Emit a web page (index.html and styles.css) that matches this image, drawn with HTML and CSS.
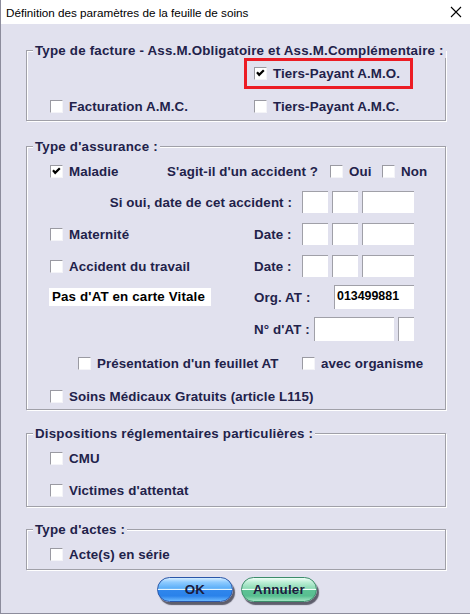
FILE: index.html
```html
<!DOCTYPE html>
<html lang="fr">
<head>
<meta charset="utf-8">
<title>Définition des paramètres de la feuille de soins</title>
<link rel="stylesheet" href="styles.css">
</head>
<body>
<div class="window">
  <div class="titlebar">
    <span class="title">Définition des paramètres de la feuille de soins</span>
    <svg class="close" width="12" height="12" viewBox="0 0 12 12"><path d="M1 1 L11 11 M11 1 L1 11" stroke="#000" stroke-width="1.1" fill="none"/></svg>
  </div>
  <div class="content">
    <fieldset class="group g1">
      <legend>Type de facture - Ass.M.Obligatoire et Ass.M.Complémentaire :</legend>
      <div class="row-red">
        <div class="redbox">
          <span class="check"><span class="cb"><svg viewBox="0 0 11 11" width="11" height="11"><path d="M2 4.2 L4.2 6.8 L8.8 2.2" stroke="#000" stroke-width="2.2" fill="none"/></svg></span><span>Tiers-Payant A.M.O.</span></span>
        </div>
      </div>
      <div class="row g1b">
        <span class="check w204"><span class="cb"></span><span>Facturation A.M.C.</span></span>
        <span class="check"><span class="cb"></span><span>Tiers-Payant A.M.C.</span></span>
      </div>
    </fieldset>

    <fieldset class="group g2">
      <legend>Type d'assurance :</legend>
      <div class="row r1">
        <span class="check w117"><span class="cb"><svg viewBox="0 0 11 11" width="11" height="11"><path d="M2 4.2 L4.2 6.8 L8.8 2.2" stroke="#000" stroke-width="2.2" fill="none"/></svg></span><span>Maladie</span></span>
        <span class="w163">S'agit-il d'un accident ?</span>
        <span class="check w52"><span class="cb"></span><span>Oui</span></span>
        <span class="check"><span class="cb"></span><span>Non</span></span>
      </div>
      <div class="row r2">
        <span class="lbl-right">Si oui, date de cet accident :</span>
        <span class="date"><span class="in d2"></span><span class="in d2"></span><span class="in y4"></span></span>
      </div>
      <div class="row r3">
        <span class="check w204"><span class="cb"></span><span>Maternité</span></span>
        <span class="w48">Date :</span>
        <span class="date"><span class="in d2"></span><span class="in d2"></span><span class="in y4"></span></span>
      </div>
      <div class="row r4">
        <span class="check w204"><span class="cb"></span><span>Accident du travail</span></span>
        <span class="w48">Date :</span>
        <span class="date"><span class="in d2"></span><span class="in d2"></span><span class="in y4"></span></span>
      </div>
      <div class="row r5">
        <span class="pas">Pas d'AT en carte Vitale</span>
        <span class="org-lbl">Org. AT :</span>
        <span class="in org">013499881</span>
      </div>
      <div class="row r6">
        <span class="nat-lbl">N° d'AT :</span>
        <span class="date"><span class="in nat"></span><span class="in nat-key"></span></span>
      </div>
      <div class="row r7">
        <span class="check w224"><span class="cb"></span><span>Présentation d'un feuillet AT</span></span>
        <span class="check"><span class="cb"></span><span>avec organisme</span></span>
      </div>
      <div class="row r8">
        <span class="check"><span class="cb"></span><span>Soins Médicaux Gratuits (article L115)</span></span>
      </div>
    </fieldset>

    <fieldset class="group g3">
      <legend>Dispositions réglementaires particulières :</legend>
      <div class="row r-cmu">
        <span class="check"><span class="cb"></span><span>CMU</span></span>
      </div>
      <div class="row r-vic">
        <span class="check"><span class="cb"></span><span>Victimes d'attentat</span></span>
      </div>
    </fieldset>

    <fieldset class="group g4">
      <legend>Type d'actes :</legend>
      <div class="row r-act">
        <span class="check"><span class="cb"></span><span>Acte(s) en série</span></span>
      </div>
    </fieldset>

    <div class="buttons">
      <button class="btn ok">OK</button>
      <button class="btn cancel">Annuler</button>
    </div>
  </div>
</div>
</body>
</html>
```

FILE: styles.css
```css
html, body {
  margin: 0;
  padding: 0;
  background: #e1e1ee;
}

.window {
  width: 470px;
  height: 614px;
  box-sizing: border-box;
  background: #e1e1ee;
  border-left: 1px solid #8c8c9c;
  border-bottom: 1px solid #8c8c9c;
  overflow: hidden;
  font-family: "Liberation Sans", Arial, sans-serif;
}

.titlebar {
  height: 24px;
  background: #ffffff;
  display: flex;
  align-items: center;
  justify-content: space-between;
  padding: 0 8px 0 5px;
}

.title {
  font-family: "Liberation Sans", Arial, sans-serif;
  font-size: 11.7px;
  color: #000;
}

.close {
  display: block;
}

.content {
  padding-left: 25px;
  font-size: 13.33px;
  font-weight: bold;
  color: #22224a;
  letter-spacing: 0.1px;
}

.group {
  width: 420px;
  box-sizing: border-box;
  margin: 0;
  padding: 0;
  border: 1px solid #a0a0a8;
  box-shadow: 1px 1px 0 #ffffff, inset 1px 1px 0 #ffffff;
  min-width: 0;
}

.group legend {
  margin-left: 6px;
  padding: 0 2px;
  line-height: 15px;
  height: 15px;
  background: #e1e1ee;
  white-space: nowrap;
  letter-spacing: 0.2px;
}

.g1 { margin-top: 19px; padding-bottom: 2px; }
.g2 { margin-top: 18px; padding-bottom: 1px; }
.g3 { margin-top: 16px; padding-bottom: 4px; }
.g4 { margin-top: 15px; padding-bottom: 3px; }

.row {
  display: flex;
  align-items: center;
  height: 24px;
  padding-left: 23px;
  white-space: nowrap;
}

.row-red {
  display: flex;
}

.redbox {
  margin-left: 217px;
  width: 169px;
  height: 31px;
  box-sizing: border-box;
  border: 3px solid #ec1c24;
  display: flex;
  align-items: center;
  padding-left: 7px;
}

.g1b { margin-top: 5px; }

.r1 { margin-top: 5px; }
.r2 { margin-top: 7px; }
.r3 { margin-top: 8px; }
.r4 { margin-top: 8px; }
.r5 { margin-top: 7px; }
.r6 { margin-top: 8px; }
.r7 { margin-top: 10px; padding-left: 51px; }
.r8 { margin-top: 9px; }

.r-cmu { margin-top: 5px; }
.r-vic { margin-top: 8px; }
.r-act { margin-top: 5px; }

.check {
  display: flex;
  align-items: center;
  gap: 6px;
  flex: none;
}

.cb {
  width: 13px;
  height: 13px;
  box-sizing: border-box;
  background: #ffffff;
  border-top: 1px solid #9a9aa2;
  border-left: 1px solid #9a9aa2;
  border-right: 1px solid #f4f4f8;
  border-bottom: 1px solid #f4f4f8;
  flex: none;
  display: flex;
}

.cb svg { display: block; }

.w117 { width: 117px; }
.w163 { width: 163px; flex: none; }
.w52 { width: 52px; }
.w204 { width: 204px; }
.w224 { width: 224px; }
.w48 { width: 48px; flex: none; }

.lbl-right {
  width: 252px;
  box-sizing: border-box;
  padding-right: 10px;
  text-align: right;
  flex: none;
}

.date {
  display: flex;
  gap: 4px;
}

.in {
  display: block;
  height: 22px;
  box-sizing: border-box;
  background: #ffffff;
  border-top: 1px solid #a0a0a8;
  border-left: 1px solid #a0a0a8;
  flex: none;
}

.d2 { width: 26px; }
.y4 { width: 52px; }

.pas {
  margin-left: -1px;
  width: 162px;
  height: 18px;
  box-sizing: border-box;
  background: #ffffff;
  color: #000;
  padding-left: 3px;
  line-height: 18px;
  flex: none;
  letter-spacing: 0.15px;
}

.org-lbl {
  margin-left: 43px;
  width: 80px;
  flex: none;
}

.in.org {
  width: 80px;
  height: 24px;
  color: #000;
  font-size: 12.4px;
  letter-spacing: 0;
  padding: 3px 0 0 2px;
  line-height: 14px;
}

.nat-lbl {
  margin-left: 204px;
  width: 60px;
  flex: none;
}

.in.nat { width: 80px; height: 24px; }
.in.nat-key { width: 16px; height: 24px; }

.buttons {
  margin-top: 7px;
  display: flex;
  gap: 8px;
  padding-left: 131px;
}

.btn {
  width: 76px;
  height: 25px;
  box-sizing: border-box;
  border-radius: 13px;
  font-family: "Liberation Sans", Arial, sans-serif;
  font-size: 13.33px;
  font-weight: bold;
  letter-spacing: 0.2px;
  color: #1c1c3e;
  padding: 0;
  box-shadow: 2px 3px 1px rgba(50, 50, 64, 0.75);
  cursor: default;
}

.ok {
  border: 1px solid #2a56a8;
  background: linear-gradient(to bottom,
    #d4ecff 0%, #8ecbff 18%, #5aaef8 45%, #e4f4ff 50%, #2f86ec 54%, #2a82ea 78%, #6ab8ff 100%);
}

.cancel {
  border: 1px solid #3c8c6a;
  background: linear-gradient(to bottom,
    #eefdf5 0%, #bdeed6 18%, #8cdab4 45%, #f0fff8 50%, #5cc294 54%, #58be90 78%, #9ee4c0 100%);
}
```
